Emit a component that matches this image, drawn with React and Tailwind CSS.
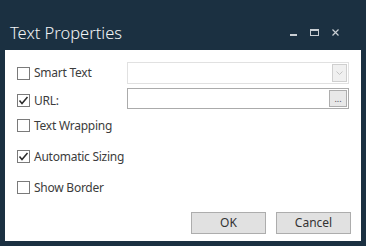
import React from "react";

function Check({ checked, label }) {
  return (
    <div className="flex items-center h-[13px]">
      <div className="w-[13px] h-[13px] border border-[#7a7a7a] bg-white flex items-center justify-center shrink-0">
        {checked && (
          <svg width="11" height="11" viewBox="0 0 11 11">
            <path d="M1.5 5.5 L4 8.5 L9.5 2" fill="none" stroke="#2b2b2b" strokeWidth="1.5" />
          </svg>
        )}
      </div>
      <span className="ml-[4px] text-[12px] tracking-[-0.25px] leading-none text-[#3c3c3c]">{label}</span>
    </div>
  );
}

function App() {
  return (
    <div
      className="w-[366px] h-[246px] bg-[#1b3041] flex flex-col"
      style={{ fontFamily: '"Segoe UI", "Noto Sans", sans-serif' }}
    >
      <div className="h-[50px] flex items-start justify-between pl-[10px]">
        <div className="mt-[21px] text-[16.5px] font-light leading-[24px] text-[#f2f4f6]">
          Text Properties
        </div>
        <div className="flex items-start mt-[29px] mr-[27px]">
          <div className="w-[7px] h-[2px] bg-[#c9ced3] mt-[5px]" />
          <div className="w-[9px] h-[7px] border border-t-2 border-[#c9ced3] ml-[13px]" />
          <svg className="ml-[13px]" width="7" height="7" viewBox="0 0 7 7">
            <path d="M0.5 0.5 L6.5 6.5 M6.5 0.5 L0.5 6.5" stroke="#c9ced3" strokeWidth="1.2" />
          </svg>
        </div>
      </div>

      <div className="flex-1 mx-[5px] mb-[5px] bg-white flex flex-col px-[12px] pt-[12px]">
        <div className="flex items-center h-[22px]">
          <div className="w-[110px]">
            <Check label="Smart Text" />
          </div>
          <div className="flex-1 h-[22px] border border-[#e1e1e1] flex items-center justify-end pr-[1px]">
            <div className="w-[15px] h-[18px] border border-[#cfcfcf] bg-[#f0f0f0] flex items-center justify-center">
              <svg width="7" height="5" viewBox="0 0 7 5">
                <path d="M0.5 0.5 L3.5 3.5 L6.5 0.5" fill="none" stroke="#c4c4c4" strokeWidth="1" />
              </svg>
            </div>
          </div>
        </div>

        <div className="flex items-start h-[21px] mt-[4px]">
          <div className="w-[110px] pt-[6px]">
            <Check checked label="URL:" />
          </div>
          <div className="flex-1 h-[21px] border border-[#ababab] flex items-center justify-end pr-[1px]">
            <div className="w-[18px] h-[17px] border border-[#adadad] bg-[#e8e8e8] flex items-end justify-center pb-[3px]">
              <span className="text-[9px] leading-none text-[#505060]">...</span>
            </div>
          </div>
        </div>

        <div className="mt-[10px]">
          <Check label="Text Wrapping" />
        </div>
        <div className="mt-[18px]">
          <Check checked label="Automatic Sizing" />
        </div>
        <div className="mt-[18px]">
          <Check label="Show Border" />
        </div>

        <div className="flex justify-end gap-[10px] mt-[18px] -mr-[2px]">
          <button className="w-[75px] h-[22px] border border-[#adadad] bg-[#e1e1e1] text-[12px] text-[#333]">
            OK
          </button>
          <button className="w-[75px] h-[22px] border border-[#adadad] bg-[#e1e1e1] text-[12px] text-[#333]">
            Cancel
          </button>
        </div>
      </div>
    </div>
  );
}

export default App;
